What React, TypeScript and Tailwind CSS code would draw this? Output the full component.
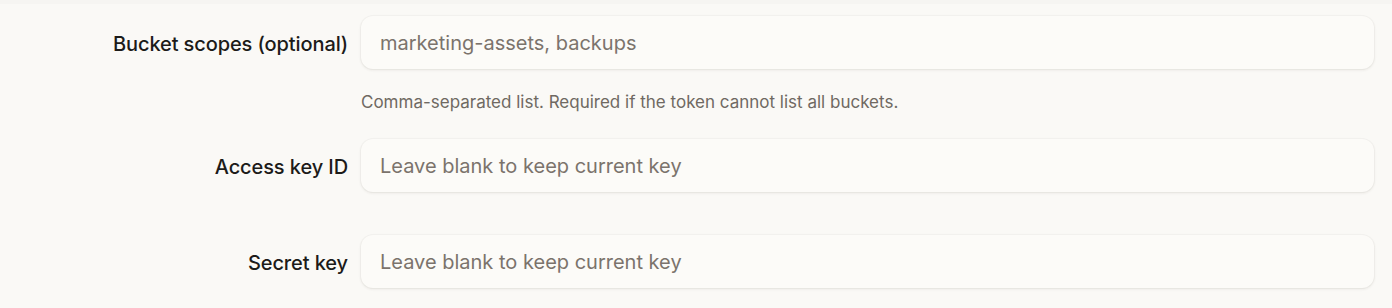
import React from "react";

const font = { fontFamily: "Inter, 'Noto Sans', sans-serif" };

function Row({ label, placeholder, helper, className = "" }: { label: string; placeholder: string; helper?: string; className?: string }) {
  return (
    <div className={"flex items-start " + className}>
      <label className="w-[349px] shrink-0 pr-[1px] text-right text-[20px] font-medium leading-[53px] text-[#1c1b19] tracking-[-0.005em] pt-[2px]">
        {label}
      </label>
      <div className="ml-[12px] w-[1013px] shrink-0">
        <input
          placeholder={placeholder}
          className="h-[53px] w-full rounded-[12px] bg-[#fcfbf8] px-[19px] text-[20px] text-[#1c1b19] outline-none shadow-[0_1px_3px_rgba(60,50,30,0.10),0_0_0_1px_rgba(60,50,30,0.025)] placeholder:text-[#7b736c]"
          style={font}
        />
        {helper && (
          <p className="mt-[23px] text-[17px] leading-[20px] text-[#6f6962]">{helper}</p>
        )}
      </div>
    </div>
  );
}

export default function App() {
  return (
    <div className="h-[308px] w-[1392px] overflow-hidden bg-[#faf9f6]" style={font}>
      <div className="h-[4px] bg-[#f6f5f2]" />
      <div className="flex flex-col pt-[12px]">
        <Row label="Bucket scopes (optional)" placeholder="marketing-assets, backups" helper="Comma-separated list. Required if the token cannot list all buckets." />
        <Row className="mt-[27px]" label="Access key ID" placeholder="Leave blank to keep current key" />
        <Row className="mt-[41px]" label="Secret key" placeholder="Leave blank to keep current key" />
      </div>
    </div>
  );
}
